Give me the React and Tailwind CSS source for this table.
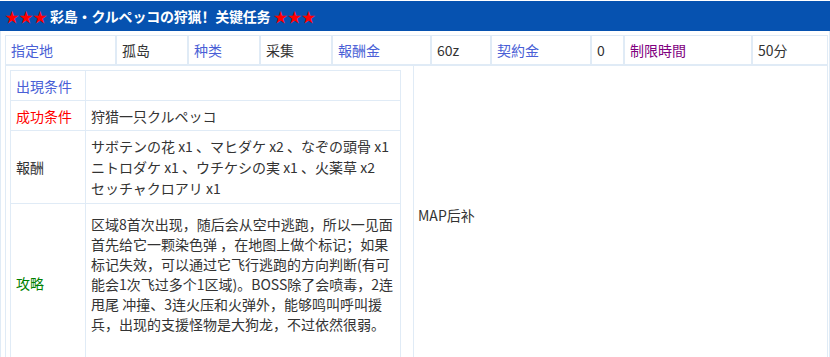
const info = [
  { text: '指定地', label: true },
  { text: '孤岛' },
  { text: '种类', label: true },
  { text: '采集' },
  { text: '報酬金', label: true },
  { text: '60z' },
  { text: '契約金', label: true },
  { text: '0' },
  { text: '制限時間', purple: true },
  { text: '50分' },
]

const reward = [
  'サボテンの花 x1 、マヒダケ x2 、なぞの頭骨 x1',
  'ニトロダケ x1 、ウチケシの実 x1 、火薬草 x2',
  'セッチャクロアリ x1',
]

const strategy = [
  '区域8首次出现，随后会从空中逃跑，所以一见面',
  '首先给它一颗染色弹 ，在地图上做个标记；如果',
  '标记失效，可以通过它飞行逃跑的方向判断(有可',
  '能会1次飞过多个1区域)。BOSS除了会喷毒，2连',
  '甩尾 冲撞、3连火压和火弹外，能够鸣叫呼叫援',
  '兵，出现的支援怪物是大狗龙，不过依然很弱。',
]

function Stars() {
  return <span className="text-[#ff0000]">★★★</span>
}

export default function App() {
  return (
    <div className="w-[830px] h-[357px] overflow-hidden bg-white text-[14px] text-[#333] font-['Noto_Sans_CJK_SC',sans-serif]">
      {/* title bar */}
      <div className="mt-px h-[30px] bg-[#0652b0] px-[5px] flex items-center font-bold text-white whitespace-nowrap">
        <Stars /><span className="ml-[3px] tracking-[-0.2px]">彩島・クルペッコの狩猟！关键任务</span><span className="ml-[3px]"><Stars /></span>
      </div>

      <div className="border-x border-[#e0ebf6] h-[326px] pt-[4px] pl-[4px] pr-px">
        {/* info row */}
        <div className="grid grid-cols-[109px_72px_72px_72px_99px_60px_100px_33px_128px_78px] h-[31px] border border-[#e0ebf6] border-b-2">
          {info.map((c, i) => (
            <div
              key={i}
              className={`pl-[5px] pt-px flex items-center whitespace-nowrap ${i > 0 ? 'border-l-2 border-[#e0ebf6]' : ''} ${
                c.label ? 'text-[#4a5fd6]' : c.purple ? 'text-[#800080]' : 'text-[#333]'
              }`}
            >
              {c.text}
            </div>
          ))}
        </div>

        {/* detail row */}
        <div className="flex h-[300px]">
          <div className="w-[408px] border-l border-[#e0ebf6] pt-[4px] pl-[4px]">
            <div className="w-[391px] border border-[#e0ebf6]">
              <div className="flex h-[30px] border-b border-[#e0ebf6]">
                <div className="w-[74px] pl-[5px] pt-px flex items-center text-[#4a5fd6]">出現条件</div>
                <div className="flex-1 border-l border-[#e0ebf6]"></div>
              </div>
              <div className="flex h-[30px] border-b border-[#e0ebf6]">
                <div className="w-[74px] pl-[5px] pt-px flex items-center text-[#ff0000]">成功条件</div>
                <div className="flex-1 border-l border-[#e0ebf6] pl-[5px] pt-px flex items-center">狩猎一只クルペッコ</div>
              </div>
              <div className="flex h-[73px] border-b border-[#e0ebf6]">
                <div className="w-[74px] pl-[5px] flex items-center">報酬</div>
                <div className="flex-1 border-l border-[#e0ebf6] pl-[5px] py-[5px] leading-[21px] whitespace-nowrap">
                  {reward.map((l, i) => <div key={i}>{l}</div>)}
                </div>
              </div>
              <div className="flex h-[156px]">
                <div className="w-[74px] pl-[5px] pt-[3px] flex items-center text-[#008000]">攻略</div>
                <div className="flex-1 border-l border-[#e0ebf6] pl-[5px] pt-[10px] leading-[20px] whitespace-nowrap">
                  {strategy.map((l, i) => <div key={i}>{l}</div>)}
                </div>
              </div>
            </div>
          </div>
          <div className="flex-1 border-x border-[#e0ebf6] h-[298px] pl-[4px] flex items-center">MAP后补</div>
        </div>
      </div>
    </div>
  )
}
